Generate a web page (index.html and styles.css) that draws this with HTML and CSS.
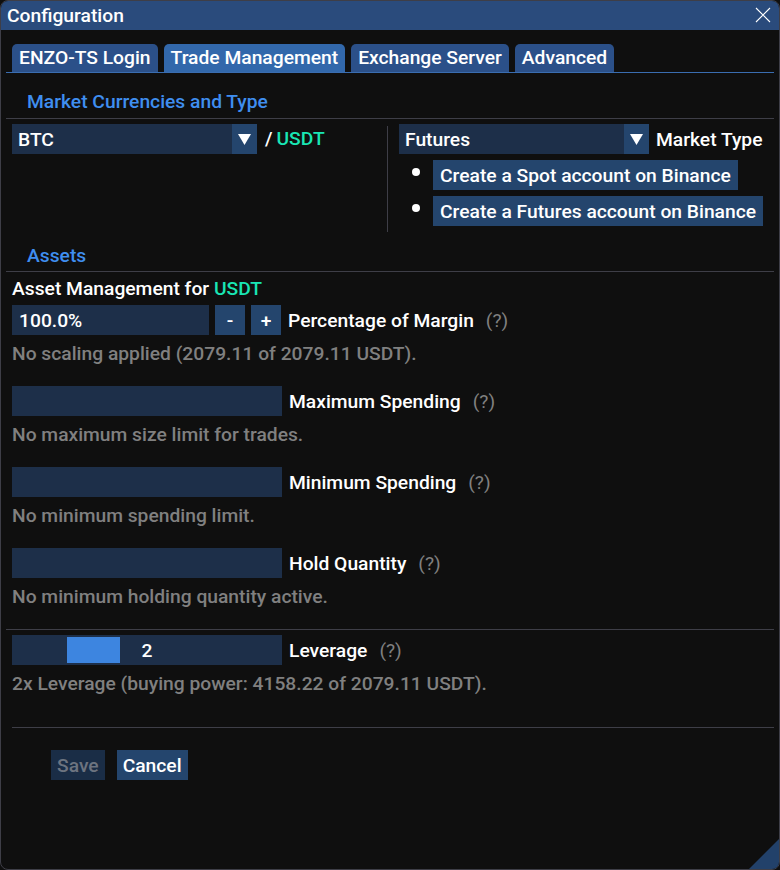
FILE: index.html
```html
<!DOCTYPE html>
<html>
<head>
<meta charset="utf-8">
<link rel="stylesheet" href="styles.css">
</head>
<body>
<div class="window">
  <div class="titlebar">
    <span class="title">Configuration</span>
    <svg class="close" width="16" height="16" viewBox="0 0 16 16"><path d="M1 1 L15 15 M15 1 L1 15" stroke="#ffffff" stroke-width="1.1" fill="none"/></svg>
  </div>
  <div class="body">
    <div class="tabbar">
      <div class="tab">ENZO-TS Login</div>
      <div class="tab active">Trade Management</div>
      <div class="tab">Exchange Server</div>
      <div class="tab">Advanced</div>
    </div>

    <div class="heading h-market">Market Currencies and Type</div>
    <div class="sep sep-market"></div>

    <div class="market">
      <div class="mcol-left">
        <div class="row">
          <div class="combo combo-btc"><span class="combo-text">BTC</span><span class="combo-arrow"><svg width="13" height="11" viewBox="0 0 13 11"><path d="M0 0 H13 L6.5 11 Z" fill="#ffffff"/></svg></span></div>
          <span class="slash">/</span><span class="green">USDT</span>
        </div>
      </div>
      <div class="vsep"></div>
      <div class="mcol-right">
        <div class="row">
          <div class="combo combo-fut"><span class="combo-text">Futures</span><span class="combo-arrow"><svg width="13" height="11" viewBox="0 0 13 11"><path d="M0 0 H13 L6.5 11 Z" fill="#ffffff"/></svg></span></div>
          <span class="label">Market Type</span>
        </div>
        <div class="bullet-row"><span class="bullet-cell"><span class="dot"></span></span><span class="btn">Create a Spot account on Binance</span></div>
        <div class="bullet-row"><span class="bullet-cell"><span class="dot"></span></span><span class="btn">Create a Futures account on Binance</span></div>
      </div>
    </div>

    <div class="heading h-assets">Assets</div>
    <div class="sep sep-assets"></div>

    <div class="text am-title">Asset Management for <span class="green">USDT</span></div>

    <div class="row field first">
      <div class="input input-pct">100.0%</div>
      <span class="btn small">-</span>
      <span class="btn small">+</span>
      <span class="label">Percentage of Margin</span><span class="help">(?)</span>
    </div>
    <div class="desc">No scaling applied (2079.11 of 2079.11 USDT).</div>

    <div class="row field">
      <div class="input input-full"></div>
      <span class="label">Maximum Spending</span><span class="help">(?)</span>
    </div>
    <div class="desc">No maximum size limit for trades.</div>

    <div class="row field">
      <div class="input input-full"></div>
      <span class="label">Minimum Spending</span><span class="help">(?)</span>
    </div>
    <div class="desc">No minimum spending limit.</div>

    <div class="row field">
      <div class="input input-full"></div>
      <span class="label">Hold Quantity</span><span class="help">(?)</span>
    </div>
    <div class="desc">No minimum holding quantity active.</div>

    <div class="sep sep-lev"></div>

    <div class="row slider-row">
      <div class="slider"><span class="grab"></span><span class="slider-val">2</span></div>
      <span class="label">Leverage</span><span class="help">(?)</span>
    </div>
    <div class="desc">2x Leverage (buying power: 4158.22 of 2079.11 USDT).</div>

    <div class="sep-inner"></div>

    <div class="actions">
      <span class="btn act disabled">Save</span>
      <span class="btn act">Cancel</span>
    </div>
  </div>
  <div class="grip"></div>
</div>
</body>
</html>
```

FILE: styles.css
```css
* { box-sizing: border-box; }
html, body { margin: 0; padding: 0; background: #0f0f0f; }
body {
  font-family: Roboto, "Noto Sans", sans-serif;
  font-size: 19.25px;
  font-weight: 500;
  color: #ffffff;
  line-height: 20px;
}
.window {
  position: relative;
  width: 780px;
  height: 870px;
  border: 1px solid #3e3e47;
  border-radius: 8px 8px 8px 8px;
  background: #0f0f0f;
  overflow: hidden;
}
.titlebar {
  height: 29px;
  background: #2a4b7c;
  display: flex;
  align-items: center;
  justify-content: space-between;
  padding: 0 8px 0 6px;
}
.close { display: block; margin-top: -1px; }

.body { padding: 0 5px 0 11px; }

.tabbar {
  display: flex;
  gap: 6px;
  margin: 14px 0 0 -6px;
  padding-left: 6px;
  border-bottom: 1px solid #3a6db0;
}
.tab {
  height: 28px;
  padding: 0 7px;
  background: #2b5089;
  border-radius: 5px 5px 0 0;
  display: flex;
  align-items: center;
}
.tab.active { background: #3268ab; }

.heading { color: #3f8ef0; padding-left: 15px; height: 20px; padding-top: 1px; }
.h-market { margin-top: 18px; }
.h-assets { margin-top: 13px; }

.sep { height: 1px; background: #3e3e47; margin-left: -6px; }
.sep-market { margin-top: 7px; }
.sep-assets { margin-top: 6px; }
.sep-lev { margin-top: 23px; }
.sep-inner { height: 1px; background: #3e3e47; margin-top: 34px; }

.row { display: flex; align-items: center; height: 30px; }

.market { display: flex; align-items: flex-start; margin-top: 5px; }
.mcol-left { width: 375px; }
.vsep { width: 1px; height: 106px; margin-top: 2px; background: #3e3e47; }
.mcol-right { margin-left: 11px; }

.combo {
  display: flex;
  height: 30px;
  background: #1d2f49;
}
.combo-text { flex: 1; padding: 1px 0 0 6px; display: flex; align-items: center; }
.combo-arrow {
  width: 25px;
  background: #24456d;
  display: flex;
  align-items: center;
  justify-content: center;
}
.combo-arrow svg { display: block; }
.combo-btc { width: 245px; }
.combo-fut { width: 250px; }
.slash { margin-left: 8px; }
.green { color: #19e6b4; }
.label { margin-left: 7px; padding-top: 1px; }
.slash + .green { margin-left: 4px; }

.bullet-row { display: flex; height: 30px; margin-top: 6px; }
.bullet-cell { width: 34px; position: relative; }
.dot {
  position: absolute;
  left: 13px;
  top: 8px;
  width: 8px;
  height: 8px;
  border-radius: 50%;
  background: #ffffff;
}
.btn {
  height: 30px;
  padding: 1px 7px 0;
  background: #24456d;
  display: inline-flex;
  align-items: center;
  justify-content: center;
}

.am-title { margin-top: 6px; height: 20px; padding-top: 1px; }

.field { margin-top: 23px; }
.field.first { margin-top: 7px; }
.input { height: 30px; background: #1d2f49; padding: 1px 0 0 7px; display: flex; align-items: center; }
.input-pct { width: 197px; }
.input-full { width: 270px; }
.btn.small { width: 30px; padding: 1px 0 0; margin-left: 6px; }
.btn.small + .btn.small { margin-left: 6px; }
.help { color: #808080; margin-left: 12px; font-weight: 400; padding-top: 1px; }

.desc { color: #808080; margin-top: 8px; height: 20px; padding-top: 1px; }

.slider-row { margin-top: 5px; }
.slider {
  position: relative;
  width: 270px;
  height: 30px;
  background: #1d2f49;
  display: flex;
  align-items: center;
  justify-content: center;
  padding-top: 1px;
}
.grab {
  position: absolute;
  left: 55px;
  top: 2px;
  width: 53px;
  height: 26px;
  background: #3d85e0;
}
.slider-val { position: relative; }

.actions { display: flex; gap: 12px; margin-top: 22px; padding-left: 39px; }
.btn.act { padding: 1px 6px 0; }
.btn.disabled { background: #1a2d46; color: #6d7480; }

.grip {
  position: absolute;
  right: 0;
  bottom: 0;
  width: 30px;
  height: 30px;
  background: #22416a;
  clip-path: polygon(100% 0, 100% 100%, 0 100%);
}
```
